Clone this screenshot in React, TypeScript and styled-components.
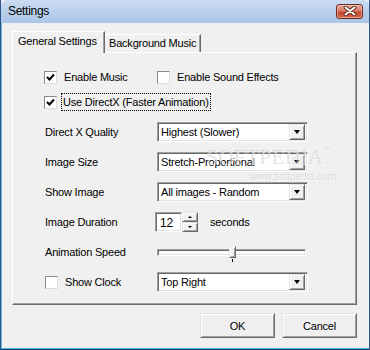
import React from 'react';
import styled, {createGlobalStyle} from 'styled-components';

const GlobalStyle = createGlobalStyle`
  html, body {
    margin: 0;
    padding: 0;
    background: #f0f0f0;
  }
  body {
    font-family: "Liberation Sans", Arial, sans-serif;
    font-size: 11px;
    letter-spacing: -0.2px;
    color: #000;
  }
  * {
    box-sizing: border-box;
  }
`;

const CheckMark = () => (
  <svg width="9" height="9" viewBox="0 0 9 9">
    <path d="M1 4 L3.5 6.5 L8 1.5" fill="none" stroke="#000" strokeWidth="1.9" />
  </svg>
);

const CloseGlyph = () => (
  <svg width="14" height="10" viewBox="0 0 14 10">
    <path d="M2.5 1.5 L11.5 8.5 M11.5 1.5 L2.5 8.5" stroke="#5a1d14" strokeWidth="3.6" strokeLinecap="round" />
    <path d="M2.5 1.5 L11.5 8.5 M11.5 1.5 L2.5 8.5" stroke="#fff" strokeWidth="2" strokeLinecap="round" />
  </svg>
);

interface CheckProps {
  label: string;
  checked?: boolean;
  focused?: boolean;
}

const Check = ({label, checked, focused}: CheckProps) => (
  <Styled.CheckWrap>
    <Styled.Box>{checked && <CheckMark />}</Styled.Box>
    <Styled.CheckLabel $focused={focused}>{label}</Styled.CheckLabel>
  </Styled.CheckWrap>
);

const Combo = ({value}: {value: string}) => (
  <Styled.Combo>
    <Styled.ComboText>{value}</Styled.ComboText>
    <Styled.DropButton>
      <Styled.Arrow />
    </Styled.DropButton>
  </Styled.Combo>
);

export default function App() {
  const speed = 49;
  return (
    <>
      <GlobalStyle />
      <Styled.Window>
        <Styled.TitleBar>
          <Styled.Title>Settings</Styled.Title>
          <Styled.CloseButton>
            <CloseGlyph />
          </Styled.CloseButton>
        </Styled.TitleBar>
        <Styled.Client>
          <Styled.TabStrip>
            <Styled.Tab $active>General Settings</Styled.Tab>
            <Styled.Tab>Background Music</Styled.Tab>
          </Styled.TabStrip>
          <Styled.Panel>
            <Styled.CheckGroup>
              <Styled.Row>
                <Check label="Enable Music" checked />
                <Check label="Enable Sound Effects" />
              </Styled.Row>
              <Styled.Row>
                <Check label="Use DirectX (Faster Animation)" checked focused />
              </Styled.Row>
            </Styled.CheckGroup>
            <Styled.Row>
              <Styled.Label>Direct X Quality</Styled.Label>
              <Combo value="Highest (Slower)" />
            </Styled.Row>
            <Styled.Row>
              <Styled.Label>Image Size</Styled.Label>
              <Combo value="Stretch-Proportional" />
            </Styled.Row>
            <Styled.Row>
              <Styled.Label>Show Image</Styled.Label>
              <Combo value="All images - Random" />
            </Styled.Row>
            <Styled.Row>
              <Styled.Label>Image Duration</Styled.Label>
              <Styled.SpinGroup>
                <Styled.Edit>12</Styled.Edit>
                <Styled.SpinButtons>
                  <Styled.SpinButton>
                    <Styled.SmallArrow $up />
                  </Styled.SpinButton>
                  <Styled.SpinButton>
                    <Styled.SmallArrow />
                  </Styled.SpinButton>
                </Styled.SpinButtons>
                <Styled.Unit>seconds</Styled.Unit>
              </Styled.SpinGroup>
            </Styled.Row>
            <Styled.Row>
              <Styled.Label>Animation Speed</Styled.Label>
              <Styled.Slider>
                <Styled.Track />
                <Styled.Thumb style={{left: `${speed}%`}} />
                <Styled.Tick style={{left: `${speed}%`}} />
              </Styled.Slider>
            </Styled.Row>
            <Styled.Row>
              <Styled.ClockCell>
                <Check label="Show Clock" />
              </Styled.ClockCell>
              <Combo value="Top Right" />
            </Styled.Row>
            <Styled.Watermark>
              SOFTPEDIA<sup>™</sup>
              <Styled.WatermarkUrl>www.softpedia.com</Styled.WatermarkUrl>
            </Styled.Watermark>
          </Styled.Panel>
          <Styled.ButtonRow>
            <Styled.Button>OK</Styled.Button>
            <Styled.Button>Cancel</Styled.Button>
          </Styled.ButtonRow>
        </Styled.Client>
      </Styled.Window>
    </>
  );
}

const raised = `
  border: 1px solid;
  border-color: #e3e3e3 #696969 #696969 #e3e3e3;
  box-shadow: inset 1px 1px #fff, inset -1px -1px #a0a0a0;
  background: #f0f0f0;
`;

const sunken = `
  border: 1px solid;
  border-color: #a0a0a0 #fff #fff #a0a0a0;
  box-shadow: inset 1px 1px #696969, inset -1px -1px #e3e3e3;
  background: #fff;
`;

const Styled = {
  Window: styled.div`
    width: 370px;
    height: 350px;
    display: flex;
    flex-direction: column;
    border-left: 1px solid #2e5585;
    border-right: 1px solid #2e5585;
    border-bottom: 1px solid #1d3a60;
    overflow: hidden;
  `,
  TitleBar: styled.div`
    height: 23px;
    display: flex;
    align-items: center;
    padding: 0 6px 1px 7px;
    background: linear-gradient(#cadcf1, #b9d0ec 50%, #acc6e7);
    border-top-left-radius: 6px;
    border-top-right-radius: 6px;
  `,
  Title: styled.div`
    font-size: 12px;
    letter-spacing: -0.3px;
    color: #000;
  `,
  CloseButton: styled.div`
    margin-left: auto;
    width: 27px;
    height: 15px;
    display: flex;
    align-items: center;
    justify-content: center;
    border: 1px solid #6d2a20;
    border-radius: 3px;
    background: linear-gradient(#e9a99b, #d47c67 45%, #c44a30 55%, #d5654a);
    box-shadow: inset 0 0 0 1px rgba(255, 220, 210, 0.5);
  `,
  Client: styled.div`
    flex: 1;
    display: flex;
    flex-direction: column;
    padding: 8px 12px 0 10px;
    background: #f0f0f0;
    border-left: 1px solid #6cb6e4;
    border-bottom: 1px solid #45b8e6;
  `,
  TabStrip: styled.div`
    display: flex;
    align-items: flex-end;
    height: 21px;
    position: relative;
    z-index: 1;
  `,
  Tab: styled.div<{$active?: boolean}>`
    height: ${p => (p.$active ? 22 : 18)}px;
    margin-bottom: ${p => (p.$active ? -1 : 0)}px;
    padding: ${p => (p.$active ? '3px 6px 0 5px' : '2px 5px 0 4px')};
    width: ${p => (p.$active ? 93 : 96)}px;
    background: #f0f0f0;
    border-top: 1px solid #fff;
    border-left: ${p => (p.$active ? '1px solid #fff' : 'none')};
    border-right: 1px solid #696969;
    box-shadow: inset -1px 0 #a0a0a0;
    white-space: nowrap;
  `,
  Panel: styled.div`
    position: relative;
    width: 345px;
    height: 253px;
    display: flex;
    flex-direction: column;
    gap: 10px;
    padding: 14px 0 0 31px;
    border: 1px solid;
    border-color: #fff #696969 #696969 #fff;
    box-shadow: inset -1px -1px #a0a0a0;
  `,
  CheckGroup: styled.div`
    display: flex;
    flex-direction: column;
    gap: 5px;
  `,
  Row: styled.div`
    height: 20px;
    display: grid;
    grid-template-columns: 113px 1fr;
    align-items: center;
  `,
  CheckWrap: styled.div`
    display: flex;
    align-items: center;
    white-space: nowrap;
  `,
  Box: styled.div`
    width: 13px;
    height: 13px;
    flex: none;
    display: flex;
    align-items: center;
    justify-content: center;
    border: 1px solid;
    border-color: #8a8a8a #dcdcdc #dcdcdc #8a8a8a;
    background: #fff;
  `,
  CheckLabel: styled.span<{$focused?: boolean}>`
    margin-left: ${p => (p.$focused ? 4 : 5)}px;
    padding: 2px 1px 2px 1px;
    border: 1px dotted ${p => (p.$focused ? '#000' : 'transparent')};
    line-height: 12px;
  `,
  Label: styled.div`
    padding-left: 1px;
    white-space: nowrap;
  `,
  ClockCell: styled.div`
    padding-left: 1px;
  `,
  Combo: styled.div`
    width: 151px;
    height: 20px;
    display: flex;
    align-items: center;
    padding: 2px;
    ${sunken}
  `,
  ComboText: styled.div`
    flex: 1;
    padding-left: 1px;
    white-space: nowrap;
    overflow: hidden;
  `,
  DropButton: styled.div`
    width: 16px;
    height: 16px;
    display: flex;
    align-items: center;
    justify-content: center;
    ${raised}
  `,
  Arrow: styled.div`
    width: 0;
    height: 0;
    border-top: 4px solid #000;
    border-left: 3.5px solid transparent;
    border-right: 3.5px solid transparent;
  `,
  SpinGroup: styled.div`
    display: flex;
    align-items: center;
    margin-left: -2px;
  `,
  Edit: styled.div`
    width: 27px;
    height: 20px;
    padding: 3px 0 0 4px;
    font-size: 12px;
    ${sunken}
  `,
  SpinButtons: styled.div`
    display: flex;
    flex-direction: column;
    width: 16px;
    height: 20px;
  `,
  SpinButton: styled.div`
    flex: 1;
    display: flex;
    align-items: center;
    justify-content: center;
    ${raised}
  `,
  SmallArrow: styled.div<{$up?: boolean}>`
    width: 0;
    height: 0;
    border-left: 2px solid transparent;
    border-right: 2px solid transparent;
    ${p => (p.$up ? 'border-bottom: 2px solid #000;' : 'border-top: 2px solid #000;')}
  `,
  Unit: styled.span`
    margin-left: 12px;
  `,
  Slider: styled.div`
    position: relative;
    width: 149px;
    height: 20px;
    display: flex;
    align-items: center;
  `,
  Track: styled.div`
    width: 100%;
    height: 7px;
    ${sunken}
  `,
  Thumb: styled.div`
    position: absolute;
    top: 4px;
    width: 7px;
    height: 12px;
    margin-left: -1px;
    ${raised}
  `,
  Tick: styled.div`
    position: absolute;
    top: 17px;
    width: 1px;
    height: 3px;
    margin-left: 2px;
    background: #000;
  `,
  Watermark: styled.div`
    position: absolute;
    left: 193px;
    top: 90px;
    font-family: "Liberation Serif", serif;
    font-size: 21px;
    letter-spacing: 0.5px;
    white-space: nowrap;
    color: rgba(185, 185, 185, 0.4);
    text-shadow: 1px 1px rgba(255, 255, 255, 0.6);
    pointer-events: none;
    line-height: 28px;
    sup {
      font-size: 7px;
      vertical-align: top;
      line-height: 14px;
    }
  `,
  WatermarkUrl: styled.div`
    font-family: "Liberation Sans", sans-serif;
    font-size: 10px;
    letter-spacing: 0;
    line-height: 12px;
    margin-left: 44px;
  `,
  ButtonRow: styled.div`
    display: flex;
    justify-content: flex-end;
    gap: 7px;
    width: 345px;
    margin-top: 8px;
  `,
  Button: styled.div`
    width: 75px;
    height: 25px;
    display: flex;
    align-items: center;
    justify-content: center;
    ${raised}
  `,
};
